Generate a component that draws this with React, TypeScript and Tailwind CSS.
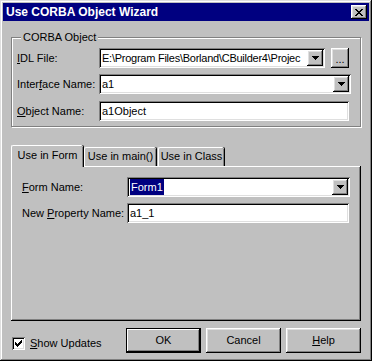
const raised =
  "shadow-[inset_-1px_-1px_#000000,inset_1px_1px_#ffffff,inset_-2px_-2px_#808080,inset_2px_2px_#dfdfdf]";
const sunken =
  "shadow-[inset_1px_1px_#808080,inset_-1px_-1px_#ffffff,inset_2px_2px_#000000,inset_-2px_-2px_#dfdfdf]";

const arrow = ["#######", ".#####.", "..###..", "...#..."];
const closeX = ["##....##", ".##..##.", "..####..", "...##...", "..####..", ".##..##.", "##....##"];
const check = ["......#", ".....##", "#...###", "##.###.", "#####..", ".###...", "..#...."];

function Pixels({ rows }: { rows: string[] }) {
  const w = rows[0].length;
  const h = rows.length;
  return (
    <svg width={w} height={h} viewBox={`0 0 ${w} ${h}`} shapeRendering="crispEdges">
      {rows.flatMap((r, y) =>
        r.split("").map((c, x) =>
          c === "#" ? <rect key={`${x}-${y}`} x={x} y={y} width={1} height={1} fill="#000000" /> : null
        )
      )}
    </svg>
  );
}

function Combo({ children, className = "" }: { children?: React.ReactNode; className?: string }) {
  return (
    <div className={`flex h-[20px] min-w-0 items-center bg-white p-[2px] ${sunken} ${className}`}>
      <div className="min-w-0 flex-1 overflow-hidden whitespace-nowrap pl-[1px]">{children}</div>
      <div className={`flex h-[16px] w-[16px] shrink-0 items-center justify-center bg-[#c0c0c0] ${raised}`}>
        <Pixels rows={arrow} />
      </div>
    </div>
  );
}

function Edit({ children, className = "" }: { children?: React.ReactNode; className?: string }) {
  return (
    <div className={`flex h-[20px] min-w-0 items-center whitespace-nowrap bg-white px-[3px] ${sunken} ${className}`}>
      {children}
    </div>
  );
}

function Btn({ children, isDefault }: { children: React.ReactNode; isDefault?: boolean }) {
  return (
    <div
      className={`flex h-[25px] w-[75px] items-center justify-center bg-[#c0c0c0] ${
        isDefault
          ? "shadow-[inset_0_0_0_1px_#000000,inset_-2px_-2px_#000000,inset_2px_2px_#ffffff,inset_-3px_-3px_#808080]"
          : raised
      }`}
    >
      {children}
    </div>
  );
}

function U({ children }: { children: React.ReactNode }) {
  return <span className="underline underline-offset-[1px]">{children}</span>;
}

export default function App() {
  return (
    <div
      className={`flex h-[361px] w-[372px] flex-col bg-[#c0c0c0] p-[3px] font-['Liberation_Sans',Arial,sans-serif] text-[11px] text-black shadow-[inset_-1px_-1px_#000000,inset_1px_1px_#dfdfdf,inset_-2px_-2px_#808080,inset_2px_2px_#ffffff]`}
    >
      {/* title bar */}
      <div className="flex h-[18px] shrink-0 items-center justify-between bg-[#000080] pl-[3px] pr-[2px]">
        <span className="text-[12px] font-bold text-white">Use CORBA Object Wizard</span>
        <div className={`flex h-[14px] w-[16px] items-center justify-center bg-[#c0c0c0] ${raised}`}>
          <Pixels rows={closeX} />
        </div>
      </div>

      <div className="flex flex-1 flex-col px-[8px]">
        {/* CORBA Object group */}
        <div className="relative mt-[16px] h-[90px] border border-[#808080] pt-[10px] pl-[5px] pr-[9px] shadow-[1px_1px_0_#ffffff,inset_1px_1px_0_#ffffff]">
          <span className="absolute -top-[8px] left-[9px] bg-[#c0c0c0] px-[2px] leading-[14px]">CORBA Object</span>
          <div className="flex h-[20px] items-center">
            <span className="w-[82px] shrink-0">
              <U>I</U>DL File:
            </span>
            <Combo className="flex-1 tracking-[-0.25px]">E:\Program Files\Borland\CBuilder4\Projec</Combo>
            <div
              className={`ml-[6px] mr-[2px] flex h-[20px] w-[18px] shrink-0 items-end justify-center bg-[#c0c0c0] pb-[5px] leading-[8px] ${raised}`}
            >
              ...
            </div>
          </div>
          <div className="mt-[6px] flex h-[20px] items-center">
            <span className="w-[82px] shrink-0">
              Inter<U>f</U>ace Name:
            </span>
            <Combo className="flex-1">a1</Combo>
          </div>
          <div className="mt-[7px] flex h-[20px] items-center">
            <span className="w-[82px] shrink-0">
              <U>O</U>bject Name:
            </span>
            <Edit className="mr-[2px] flex-1">a1Object</Edit>
          </div>
        </div>

        {/* tabs */}
        <div className="relative z-10 mt-[18px] flex h-[21px] items-end">
          <div className="-mb-px flex h-[22px] w-[72px] items-center justify-center rounded-t-[2px] border-l border-t border-white bg-[#c0c0c0] pb-[2px] shadow-[inset_-1px_0_#808080,1px_0_#000000]">
            Use in Form
          </div>
          <div className="ml-[1px] flex h-[19px] w-[72px] items-center justify-center rounded-t-[2px] border-l border-t border-white bg-[#c0c0c0] pb-[1px] shadow-[inset_-1px_0_#808080,1px_0_#000000]">
            Use in main()
          </div>
          <div className="ml-[2px] flex h-[19px] w-[66px] items-center justify-center rounded-t-[2px] border-l border-t border-white bg-[#c0c0c0] pb-[1px] shadow-[inset_-1px_0_#808080,1px_0_#000000]">
            Use in Class
          </div>
        </div>
        <div className="h-[155px] bg-[#c0c0c0] pt-[11px] pl-[11px] pr-[11px] shadow-[inset_-1px_-1px_#000000,inset_1px_1px_#ffffff,inset_-2px_-2px_#808080]">
          <div className="flex h-[20px] items-center">
            <span className="w-[105px] shrink-0">
              <U>F</U>orm Name:
            </span>
            <Combo className="flex-1">
              <span className="inline-block bg-[#000080] px-[1px] leading-[16px] text-white">Form1</span>
            </Combo>
          </div>
          <div className="mt-[6px] flex h-[20px] items-center">
            <span className="w-[105px] shrink-0">
              New <U>P</U>roperty Name:
            </span>
            <Edit className="mr-[1px] flex-1">a1_1</Edit>
          </div>
        </div>

        {/* bottom row */}
        <div className="mt-[7px] flex h-[25px]">
          <div className="flex flex-1 items-start pt-[9px] pl-[1px]">
            <div className={`flex h-[13px] w-[13px] items-center justify-center bg-white ${sunken}`}>
              <Pixels rows={check} />
            </div>
            <span className="ml-[5px] leading-[13px]">
              <U>S</U>how Updates
            </span>
          </div>
          <div className="flex gap-[5px]">
            <Btn isDefault>OK</Btn>
            <Btn>Cancel</Btn>
            <Btn>
              <span>
                <U>H</U>elp
              </span>
            </Btn>
          </div>
        </div>
      </div>
    </div>
  );
}
